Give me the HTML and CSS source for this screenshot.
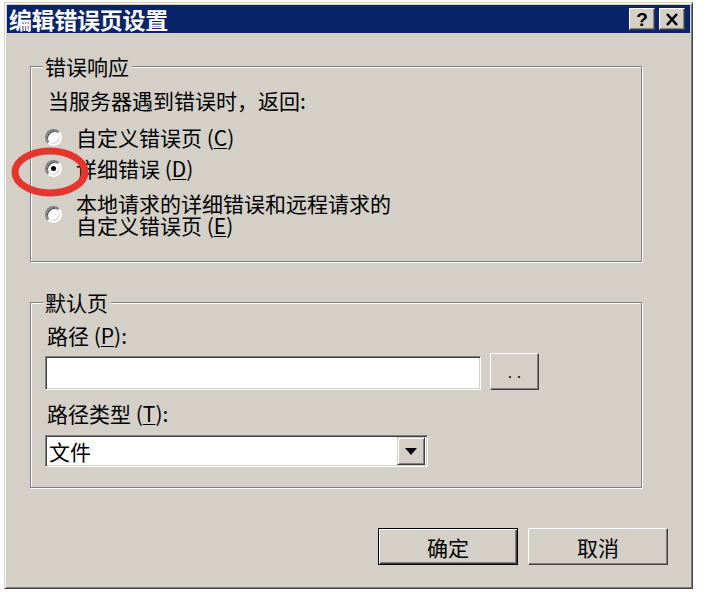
FILE: index.html
```html
<!DOCTYPE html>
<html lang="zh-CN">
<head>
    <meta charset="UTF-8">
    <meta name="viewport" content="width=device-width, initial-scale=1.0">
    <title>编辑错误页设置</title>
    <link rel="stylesheet" href="styles.css">
</head>
<body>
    <div class="screen">
        <div class="dialog">
            <div class="titlebar">
                <span class="title">编辑错误页设置</span>
                <div class="caption-btns">
                    <span class="cap-btn">?</span>
                    <span class="cap-btn">
                        <svg width="14" height="13" viewBox="0 0 14 13">
                            <path d="M2 1 L12 12 M12 1 L2 12" stroke="#000" stroke-width="2.6" fill="none"/>
                        </svg>
                    </span>
                </div>
            </div>

            <div class="content">
                <!-- 错误响应 -->
                <div class="group group-errors">
                    <span class="legend">错误响应</span>
                    <div class="prompt">当服务器遇到错误时，返回:</div>
                    <div class="option opt-custom">
                        <span class="radio"></span>
                        <span class="option-text">自定义错误页 (<u>C</u>)</span>
                    </div>
                    <div class="option opt-detail">
                        <span class="radio checked"></span>
                        <span class="option-text">详细错误 (<u>D</u>)</span>
                    </div>
                    <div class="option opt-local">
                        <span class="radio"></span>
                        <span class="option-text">本地请求的详细错误和远程请求的<br>自定义错误页 (<u>E</u>)</span>
                    </div>
                </div>

                <!-- 默认页 -->
                <div class="group group-default">
                    <span class="legend">默认页</span>
                    <div class="field-label">路径 (<u>P</u>):</div>
                    <div class="path-row">
                        <div class="textbox"></div>
                        <span class="btn browse-btn">..</span>
                    </div>
                    <div class="field-label type-label">路径类型 (<u>T</u>):</div>
                    <div class="select">
                        <span class="select-value">文件</span>
                        <span class="select-arrow">
                            <svg width="12" height="7" viewBox="0 0 12 7"><path d="M0 0 H12 L6 7 Z" fill="#000"/></svg>
                        </span>
                    </div>
                </div>

                <div class="actions">
                    <span class="btn action-btn default">确定</span>
                    <span class="btn action-btn">取消</span>
                </div>
            </div>
        </div>

        <!-- 标注 -->
        <svg class="highlight" width="78" height="50" viewBox="0 0 78 50">
            <ellipse cx="39" cy="25" rx="35" ry="21" fill="none" stroke="#e5352f" stroke-width="7"/>
        </svg>
    </div>
</body>
</html>
```

FILE: styles.css
```css
body {
    margin: 0;
    background-color: #fff;
    font-family: "Noto Sans CJK SC", "Noto Sans", sans-serif;
    color: #000;
}

.screen {
    position: relative;
    width: 707px;
    height: 592px;
}

.dialog {
    margin: 2px 0 0 4px;
    width: 689px;
    height: 587px;
    box-sizing: border-box;
    padding: 2px;
    background-color: #d4d0c8;
    border: 1px solid;
    border-color: #d4d0c8 #404040 #404040 #d4d0c8;
    box-shadow: inset 1px 1px #fff, inset -1px -1px #808080;
}

/* title bar */
.titlebar {
    height: 28px;
    background-color: #0a246a;
    display: flex;
    align-items: center;
    justify-content: space-between;
    padding-left: 2px;
}

.title {
    color: #fff;
    font-size: 23px;
    font-weight: bold;
    line-height: 28px;
    letter-spacing: -0.3px;
}

.caption-btns {
    display: flex;
    gap: 4px;
    margin-right: 5px;
}

.cap-btn {
    width: 26px;
    height: 22px;
    box-sizing: border-box;
    display: flex;
    align-items: center;
    justify-content: center;
    background-color: #d4d0c8;
    border: 1px solid;
    border-color: #fff #404040 #404040 #fff;
    box-shadow: inset -1px -1px #808080;
    font-family: "Liberation Sans", Arial, sans-serif;
    font-weight: bold;
    font-size: 19px;
    line-height: 1;
}

/* content */
.content {
    padding: 0 0 0 23px;
}

.group {
    position: relative;
    width: 612px;
    box-sizing: border-box;
    border: 1px solid #808080;
    box-shadow: inset 1px 1px #fff, 1px 1px #fff;
    padding-left: 14px;
    font-size: 21px;
    line-height: 22px;
}

.legend {
    position: absolute;
    top: -12px;
    left: 12px;
    padding: 0 3px 0 2px;
    background-color: #d4d0c8;
    font-size: 21px;
    line-height: 22px;
}

.group-errors {
    margin-top: 33px;
    height: 196px;
    padding-top: 22px;
}

.prompt {
    padding-left: 3px;
}

.option {
    display: flex;
    align-items: center;
}

.opt-custom {
    margin-top: 15px;
}

.opt-detail {
    margin-top: 9px;
}

.opt-local {
    margin-top: 13px;
}

.radio {
    flex: none;
    width: 17px;
    height: 17px;
    box-sizing: border-box;
    border-radius: 50%;
    background-color: #fff;
    border: 2px solid;
    border-color: #808080 #fff #fff #808080;
    box-shadow: inset 1px 1px #404040, inset -1px -1px #d4d0c8;
    margin-right: 14px;
    display: flex;
    align-items: center;
    justify-content: center;
}

.radio.checked::after {
    content: "";
    width: 5px;
    height: 5px;
    border-radius: 50%;
    background-color: #000;
}

u {
    text-decoration-thickness: 1px;
    text-underline-offset: 2px;
}

.group-default {
    margin-top: 40px;
    height: 186px;
    padding-top: 21px;
}

.field-label {
    padding-left: 2px;
}

.path-row {
    display: flex;
    align-items: flex-end;
    gap: 9px;
    margin-top: 7px;
    height: 37px;
}

.textbox,
.select {
    box-sizing: border-box;
    background-color: #fff;
    border: 1px solid;
    border-color: #808080 #fff #fff #808080;
    box-shadow: inset 1px 1px #404040, inset -1px -1px #d4d0c8;
}

.textbox {
    width: 436px;
    height: 34px;
}

.btn {
    box-sizing: border-box;
    display: flex;
    align-items: center;
    justify-content: center;
    background-color: #d4d0c8;
    border: 1px solid;
    border-color: #fff #404040 #404040 #fff;
    box-shadow: inset -1px -1px #808080;
}

.browse-btn {
    width: 49px;
    height: 37px;
    font-size: 14px;
    letter-spacing: 5px;
    padding-left: 5px;
    line-height: 1;
}

.type-label {
    margin-top: 12px;
}

.select {
    margin-top: 11px;
    width: 383px;
    height: 32px;
    display: flex;
    align-items: center;
    justify-content: space-between;
    padding: 2px;
}

.select-value {
    padding-left: 1px;
    line-height: 28px;
}

.select-arrow {
    width: 28px;
    height: 28px;
    box-sizing: border-box;
    display: flex;
    align-items: center;
    justify-content: center;
    background-color: #d4d0c8;
    border: 1px solid;
    border-color: #d4d0c8 #404040 #404040 #d4d0c8;
    box-shadow: inset 1px 1px #fff, inset -1px -1px #808080;
}

/* bottom buttons */
.actions {
    display: flex;
    justify-content: flex-end;
    gap: 10px;
    margin-top: 40px;
    padding-right: 22px;
}

.action-btn {
    width: 140px;
    height: 37px;
    font-size: 21px;
    line-height: 22px;
}

.action-btn.default {
    border: 1px solid #000;
    box-shadow: inset 1px 1px #fff, inset -1px -1px #404040, inset -2px -2px #808080;
}

/* annotation */
.highlight {
    position: absolute;
    left: 11px;
    top: 145px;
}
```
